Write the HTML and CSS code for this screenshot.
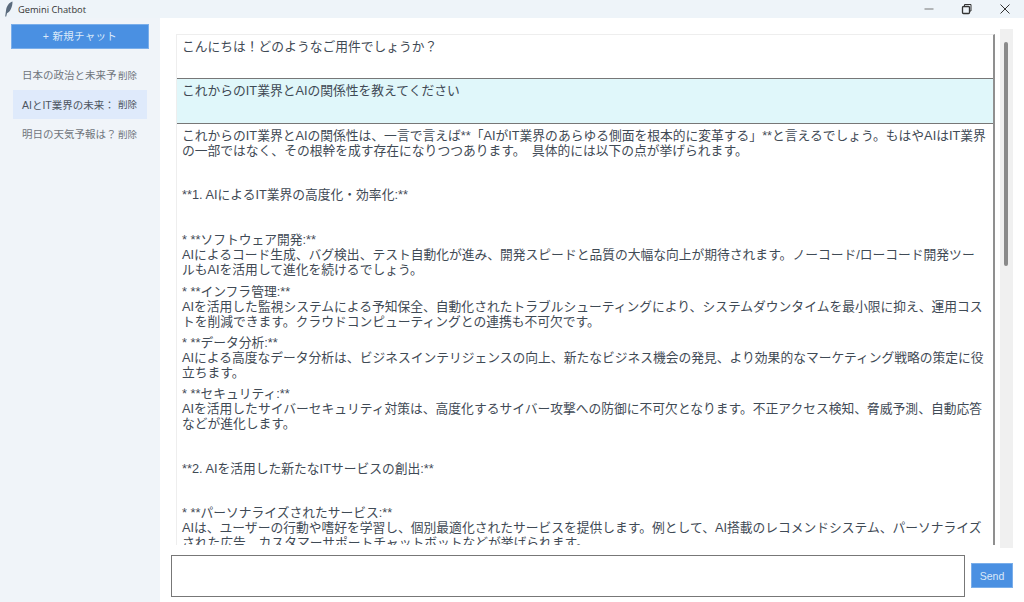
FILE: index.html
```html
<!DOCTYPE html>
<html lang="ja">
<head>
<meta charset="utf-8">
<title>Gemini Chatbot</title>
<link rel="stylesheet" href="styles.css">
</head>
<body>
<div class="app">
  <header class="titlebar">
    <svg class="feather" width="10" height="16" viewBox="0 0 10 16"><path d="M8.5 0.5C5 1.5 2.6 5 2 9.5L1.2 15.5L2.2 15.6L3 12.2C6 11 8.6 6 8.5 0.5Z" fill="#5a6b7d"/></svg>
    <span class="title">Gemini Chatbot</span>
    <div class="winctl">
      <svg width="12" height="12" viewBox="0 0 12 12"><path d="M1.5 6H10.5" stroke="#777" stroke-width="1"/></svg>
      <svg width="12" height="12" viewBox="0 0 12 12"><path d="M3.5 3V1.5H10V8H8.5" fill="none" stroke="#333" stroke-width="1"/><rect x="1.5" y="3.5" width="7" height="7" rx="1" fill="none" stroke="#333" stroke-width="1.3"/></svg>
      <svg width="12" height="12" viewBox="0 0 12 12"><path d="M1.5 1.5L10.5 10.5M10.5 1.5L1.5 10.5" stroke="#333" stroke-width="1"/></svg>
    </div>
  </header>
  <div class="body">
    <aside class="sidebar">
      <button class="newchat">+ 新規チャット</button>
      <nav class="chatlist">
        <div class="chatitem"><span>日本の政治と未来予</span><span class="del">削除</span></div>
        <div class="chatitem active"><span>AIとIT業界の未来：</span><span class="del">削除</span></div>
        <div class="chatitem"><span>明日の天気予報は？</span><span class="del">削除</span></div>
      </nav>
    </aside>
    <main class="main">
      <div class="chatrow">
        <section class="messages">
          <div class="msg bot-short">こんにちは！どのようなご用件でしょうか？</div>
          <div class="msg user">これからのIT業界とAIの関係性を教えてください</div>
          <div class="msg answer">
            <p class="gap-sm">これからのIT業界とAIの関係性は、一言で言えば**「AIがIT業界のあらゆる側面を根本的に変革する」**と言えるでしょう。もはやAIはIT業界<br>の一部ではなく、その根幹を成す存在になりつつあります。　具体的には以下の点が挙げられます。</p>
            <p class="gap-lg">**1. AIによるIT業界の高度化・効率化:**</p>
            <p class="roomy">* **ソフトウェア開発:**<br>AIによるコード生成、バグ検出、テスト自動化が進み、開発スピードと品質の大幅な向上が期待されます。ノーコード/ローコード開発ツー<br>ルもAIを活用して進化を続けるでしょう。</p>
            <p>* **インフラ管理:**<br>AIを活用した監視システムによる予知保全、自動化されたトラブルシューティングにより、システムダウンタイムを最小限に抑え、運用コス<br>トを削減できます。クラウドコンピューティングとの連携も不可欠です。</p>
            <p>* **データ分析:**<br>AIによる高度なデータ分析は、ビジネスインテリジェンスの向上、新たなビジネス機会の発見、より効果的なマーケティング戦略の策定に役<br>立ちます。</p>
            <p class="gap">* **セキュリティ:**<br>AIを活用したサイバーセキュリティ対策は、高度化するサイバー攻撃への防御に不可欠となります。不正アクセス検知、脅威予測、自動応答<br>などが進化します。</p>
            <p class="gap">**2. AIを活用した新たなITサービスの創出:**</p>
            <p>* **パーソナライズされたサービス:**<br>AIは、ユーザーの行動や嗜好を学習し、個別最適化されたサービスを提供します。例として、AI搭載のレコメンドシステム、パーソナライズ<br>された広告、カスタマーサポートチャットボットなどが挙げられます。</p>
          </div>
        </section>
        <div class="scrollbar"><div class="thumb"></div></div>
      </div>
      <div class="inputrow">
        <div class="inputbox"></div>
        <button class="send">Send</button>
      </div>
    </main>
  </div>
</div>
</body>
</html>
```
FILE: styles.css
```css
* { box-sizing: border-box; }
html, body { margin: 0; height: 100%; }
body {
  font-family: "Liberation Sans", "Noto Sans CJK JP", sans-serif;
  background: #fff;
  overflow: hidden;
}
.app { display: flex; flex-direction: column; width: 1024px; height: 602px; }
.titlebar {
  height: 18px;
  flex: none;
  display: flex;
  align-items: center;
  background: #eef4f9;
  padding-left: 4px;
}
.feather { flex: none; }
.title {
  margin-left: 4px;
  font: 9.3px "Open Sans", sans-serif;
  color: #333;
}
.winctl {
  margin-left: auto;
  display: flex;
  gap: 26px;
  padding-right: 13px;
}
.body { flex: 1; display: flex; min-height: 0; }
.sidebar {
  width: 160px;
  flex: none;
  background: #f0f4f9;
  padding: 6px 11px 0;
}
.newchat {
  display: block;
  width: 138px;
  height: 25px;
  border: 1px solid #7aaeea;
  padding: 0 0 2px;
  background: #4a90e2;
  color: #dbe9f9;
  font-family: inherit;
  font-size: 10.5px;
  letter-spacing: 0.3px;
}
.chatlist { margin-top: 11px; display: flex; flex-direction: column; }
.chatitem {
  height: 29.5px;
  margin-left: 2px;
  width: 134px;
  padding: 0 0 0 9px;
  display: flex;
  align-items: center;
  justify-content: space-between;
  padding-right: 10px;
  font-size: 10.5px;
  color: #6f757c;
  white-space: nowrap;
}
.chatitem.active { background: #dfeafb; color: #4d5560; }
.del { font-size: 9.5px; }
.main { flex: 1; display: flex; flex-direction: column; min-width: 0; }
.chatrow { display: flex; height: 530px; padding: 11px 11px 0 16px; }
.messages {
  margin-top: 5px;
  width: 820px;
  height: 511px;
  overflow: hidden;
  border-left: 1px solid #eee;
  border-top: 1px solid #eee;
  border-right: 2px solid #8f8f8f;
  font-size: 12.77px;
  line-height: 15px;
  color: #3f4a55;
  white-space: nowrap;
}
.msg { padding: 4px 5px; }
.bot-short { height: 44px; border-bottom: 1px solid #777; }
.user { height: 45px; background: #e0f7fa; border-bottom: 1px solid #777; }
.answer p { margin: 0 0 6px; }
.answer p.gap { margin-bottom: 29.5px; }
.answer p.gap-sm { margin-bottom: 28.5px; }
.answer p.gap-lg { margin-bottom: 30.5px; }
.answer p.roomy { margin-bottom: 7px; }
.scrollbar { margin-left: 5px; width: 13px; background: #f0f0f0; padding: 13px 4px 0; }
.thumb { width: 4px; height: 224px; background: #8a8a8a; border-radius: 2px; }
.inputrow {
  display: flex;
  align-items: center;
  padding: 6px 11px 5px 11px;
  gap: 6px;
  flex: 1;
}
.inputbox { width: 794px; height: 42px; border: 1px solid #777; background: #fff; }
.send {
  width: 42px;
  height: 25px;
  border: 1px solid #7aaeea;
  padding: 0;
  background: #4a90e2;
  color: #dbe9f9;
  font-family: inherit;
  font-size: 10.5px;
}
```
